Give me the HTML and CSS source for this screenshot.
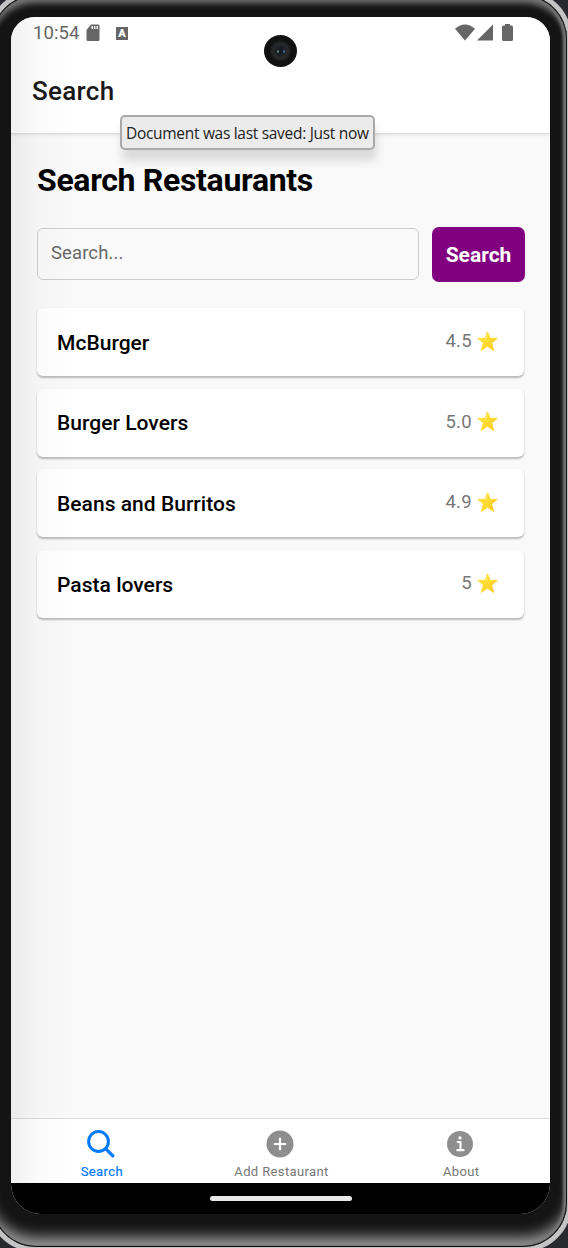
FILE: index.html
```html
<!DOCTYPE html>
<html lang="en">
<head>
<meta charset="utf-8">
<title>Search Restaurants</title>
<link rel="stylesheet" href="styles.css">
</head>
<body>
<svg width="0" height="0" class="defs">
  <defs>
    <linearGradient id="gold" x1="0" y1="0" x2="1" y2="1"><stop offset="0" stop-color="#ffe43e"/><stop offset=".6" stop-color="#ffd82e"/><stop offset="1" stop-color="#f8c527"/></linearGradient>
    <symbol id="star" viewBox="0 0 20 20">
      <path d="M10 .7 12.6 7h6.7l-5.4 4.3 2 7.2L10 14.6l-5.900 3.900 2-7.200L.7 7h6.700z" fill="url(#gold)" stroke="url(#gold)" stroke-width=".9" stroke-linejoin="round"/>
      <path d="M10 1.200 9.300 7 7.800 7.500z" fill="#fff49a"/>
      <path d="m13.400 11 5.400-3.700-5 4z" fill="#eda827"/>
    </symbol>
  </defs>
</svg>
<div class="device">
  <main class="screen">
    <header class="top">
      <div class="status">
        <span class="time">10:54</span>
        <svg class="sd" width="14" height="18" viewBox="0 0 14 18"><path d="M5 .5h7.300Q13.500.5 13.500 2v13.500q0 1.500-1.500 1.500H2Q.5 17 .5 15.500V6z" fill="#666"/><path d="M6.200 2v3M8.700 2v3M11.200 2v3" stroke="#fff" stroke-width="1.400"/></svg>
        <span class="keyboard">A</span>
        <span class="signals">
          <svg width="20" height="17" viewBox="0 0 20 17"><path d="M0 4.800Q10-4 20 4.800L10 16.500z" fill="#666"/></svg>
          <svg width="16" height="17" viewBox="0 0 16 17"><path d="M0 16.500 16 .5v16z" fill="#666"/></svg>
          <svg class="battery" width="11" height="17" viewBox="0 0 11 17"><path d="M3 0h5v1.500h1.500Q11 1.500 11 3v12.500q0 1.500-1.500 1.500h-8Q0 17 0 15.500V3q0-1.500 1.500-1.500H3z" fill="#666"/></svg>
        </span>
      </div>
      <div class="page-title">Search</div>
      <div class="camera"><i></i><i></i></div>
      <div class="tooltip">Document was last saved: Just now</div>
    </header>
    <section class="content">
      <h1>Search Restaurants</h1>
      <div class="search-row">
        <div class="field">Search...</div>
        <button class="search-button">Search</button>
      </div>
      <div class="list">
        <div class="card"><span class="name">McBurger</span><span class="rating">4.5</span><svg class="star"><use href="#star"/></svg></div>
        <div class="card"><span class="name">Burger Lovers</span><span class="rating">5.0</span><svg class="star"><use href="#star"/></svg></div>
        <div class="card"><span class="name">Beans and Burritos</span><span class="rating">4.9</span><svg class="star"><use href="#star"/></svg></div>
        <div class="card"><span class="name">Pasta lovers</span><span class="rating">5</span><svg class="star"><use href="#star"/></svg></div>
      </div>
    </section>
    <nav class="tabs">
      <div class="tab active"><svg width="28" height="28" viewBox="0 0 28 28"><circle cx="11.500" cy="11.500" r="9.900" fill="none" stroke="#007aff" stroke-width="3"/><path d="m18.800 18.800 7 7" stroke="#007aff" stroke-width="3.300" stroke-linecap="round"/></svg><span>Search</span></div>
      <div class="tab"><svg width="28" height="28" viewBox="0 0 28 28"><circle cx="14" cy="14" r="13.500" fill="#8e8e8f"/><path d="M14 8.700v10.600M8.700 14h10.600" stroke="#fff" stroke-width="2.200" stroke-linecap="round"/></svg><span>Add Restaurant</span></div>
      <div class="tab"><svg width="28" height="28" viewBox="0 0 28 28"><circle cx="14" cy="14" r="13" fill="#8e8e8f"/><circle cx="14" cy="7.900" r="1.700" fill="#fff"/><path d="M11.700 12h2.800v8M11.300 20.200h6.200" fill="none" stroke="#fff" stroke-width="2.200" stroke-linecap="round" stroke-linejoin="round"/></svg><span>About</span></div>
    </nav>
    <div class="gesture"><span></span></div>
  </main>
</div>
</body>
</html>
```
FILE: styles.css
```css
* { box-sizing: border-box; }
body { margin: 0; width: 568px; height: 1248px; overflow: hidden; background: #292a30; font-family: Roboto, sans-serif; }
.defs { position: absolute; }
.device { width: 575px; height: 1252px; margin: -5px 0 0 -8px; padding: 22px 0 0 19px; border-radius: 44px; background: #141414; box-shadow: inset 0 0 0 1px #111, inset -2px -2px 1px #777, inset -5px 0 3px -1px #777, inset 0 -16px 14px -6px #999, inset 0 11px 6px -3px #777, 0 0 0 5px #c4c4c4; }
.screen { position: relative; width: 539px; height: 1197px; border-radius: 24px 24px 30px 30px; overflow: hidden; display: flex; flex-direction: column; background: #f9f9f9; }
.screen::after { content: ""; position: absolute; z-index: 3; left: 0; top: 0; width: 64px; height: 1166px; background: linear-gradient(90deg, rgba(0,0,0,.06), rgba(0,0,0,.018) 38%, transparent); pointer-events: none; }
.top { position: relative; z-index: 2; height: 117px; flex: none; background: #fff; border-bottom: 1px solid #ddd; box-shadow: 0 1px 3px rgba(0,0,0,.09); }
.status { display: flex; height: 32px; padding: 0 37px 0 22px; align-items: center; }
.time { width: 53px; font-size: 18.500px; letter-spacing: .1px; color: #666; }
.keyboard { width: 12px; height: 13px; margin-left: 16px; background: #666; color: #fff; font-size: 11px; line-height: 13px; font-weight: 900; text-align: center; }
.signals { display: flex; margin-left: auto; gap: 2px; transform: translateY(-1px); }
.battery { margin-left: 7px; }
.page-title { padding: 26px 21px 0; font-size: 26px; line-height: 32px; font-weight: 500; letter-spacing: .3px; color: #181819; }
.camera { position: absolute; left: 253px; top: 18px; width: 33px; height: 32px; border-radius: 50%; background: radial-gradient(circle, #171b22 0 3px, #292a2b 7px, #202122 9px, #111 11px); display: flex; gap: 4px; align-items: center; justify-content: center; }
.camera i { width: 2px; height: 3px; border-radius: 50%; background: #528184; }
.camera i + i { background: #4a65a4; }
.tooltip { position: absolute; z-index: 4; left: 109px; top: 98px; width: 255px; height: 35px; border: 2px solid #a9a9a9; border-radius: 5px; background: #ebebeb; box-shadow: 2px 11px 10px rgba(0,0,0,.12); font: 15.500px/32px "Open Sans", "Noto Sans", sans-serif; letter-spacing: -.3px; color: #222; padding-left: 4px; white-space: nowrap; }
.content { flex: 1; padding: 27px 26px 0; }
h1 { margin: 0; font-size: 32px; line-height: 38px; font-weight: 700; letter-spacing: -.32px; color: #000; }
.search-row { display: flex; align-items: center; gap: 13px; margin-top: 28px; }
.field { flex: 1; height: 52px; margin-top: -1px; border: 1px solid #ccc; border-radius: 6px; padding-left: 13px; font-size: 18.500px; letter-spacing: .1px; line-height: 49px; color: #686868; }
.search-button { width: 93px; height: 55px; margin-right: -1px; padding: 0; border: 0; border-radius: 7px; background: #800080; color: #fff; font: 700 21px Roboto, sans-serif; }
.list { margin-top: 26px; display: grid; gap: 12.700px; }
.card { display: flex; align-items: center; height: 68px; padding: 0 26px 0 20px; border-radius: 6px; background: #fff; box-shadow: 0 1.500px 2px rgba(0,0,0,.26); }
.name { flex: 1; font-size: 21px; font-weight: 500; letter-spacing: .03px; color: #000; padding-top: 1px; }
.rating { font-size: 18.500px; letter-spacing: .3px; color: #777; margin: -2px 5px 0 0; }
.star { width: 21px; height: 21px; margin-top: -2px; }
.tabs { display: grid; grid-template-columns: repeat(3, 1fr); height: 65px; border-top: 1px solid #ddd; background: #fff; }
.tab { display: flex; flex-direction: column; align-items: center; padding-top: 11px; font-size: 13px; line-height: 16px; font-weight: 400; letter-spacing: .38px; color: #777; }
.tab span { margin-top: 6px; padding-left: 2px; white-space: nowrap; }
.tab.active { color: #007aff; -webkit-text-stroke: .2px; }
.gesture { height: 31px; background: #000; display: flex; justify-content: center; padding-top: 13px; }
.gesture span { width: 142px; height: 5px; border-radius: 3px; background: #e8e8e8; }
```
